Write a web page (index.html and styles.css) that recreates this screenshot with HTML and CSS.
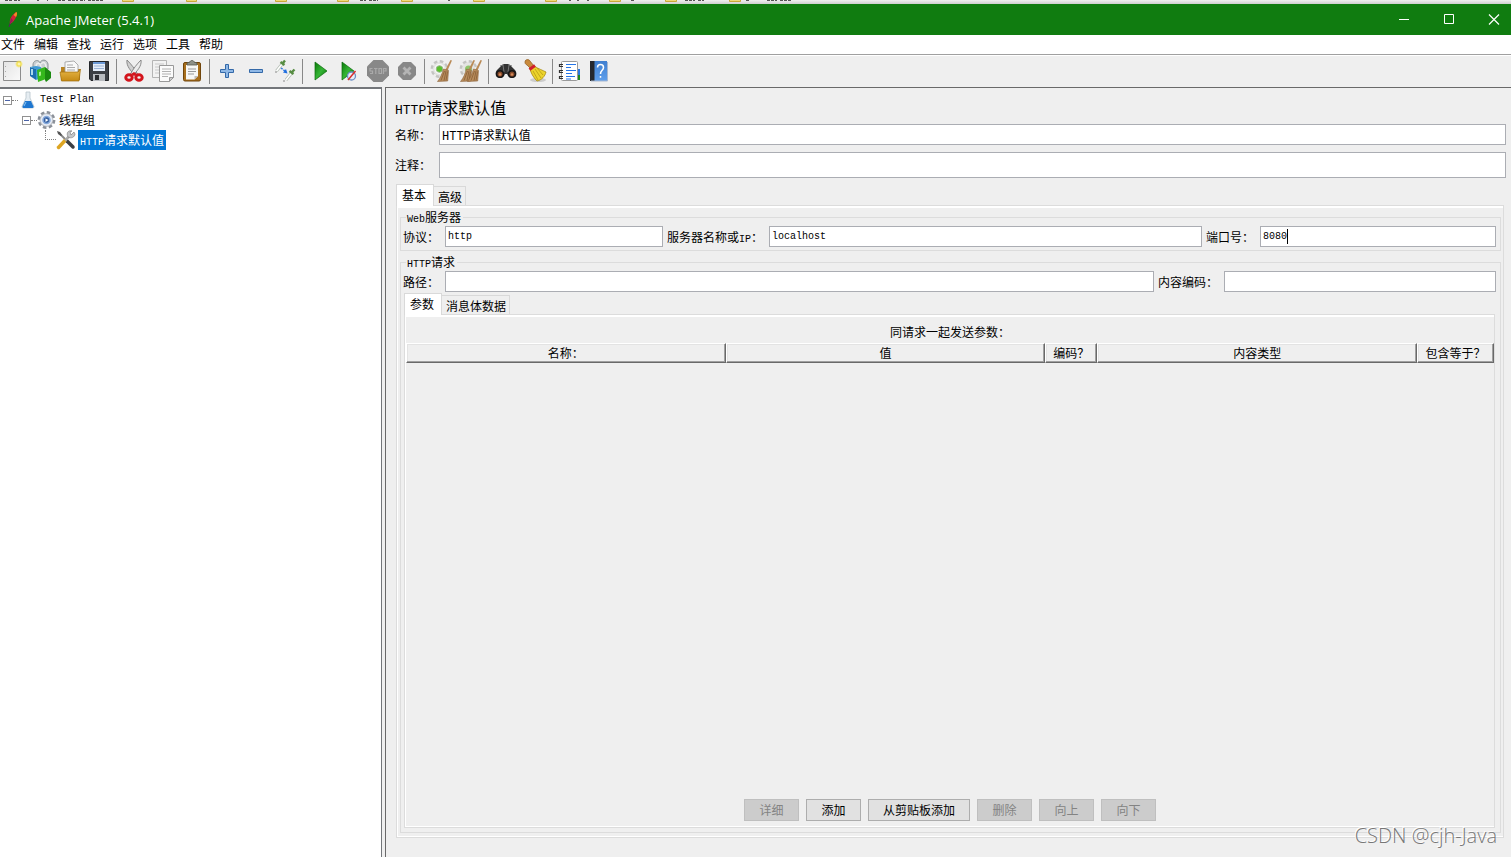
FILE: index.html
```html
<!DOCTYPE html>
<html lang="zh-CN">
<head>
<meta charset="utf-8">
<title>Apache JMeter (5.4.1)</title>
<link rel="stylesheet" href="styles.css">
</head>
<body>
<svg class="defs" width="0" height="0" aria-hidden="true">
  <defs>
    <linearGradient id="sheet" x1="0" y1="0" x2="1" y2="1"><stop offset="0" stop-color="#e4e4e4"/><stop offset="1" stop-color="#fafafa"/></linearGradient>
    <linearGradient id="gold" x1="0" y1="0" x2="0" y2="1"><stop offset="0" stop-color="#e8b84a"/><stop offset="1" stop-color="#c58a14"/></linearGradient>
    <linearGradient id="play" x1="0" y1="0" x2="1" y2="1"><stop offset="0" stop-color="#0a7a0a"/><stop offset=".5" stop-color="#35b535"/><stop offset="1" stop-color="#067006"/></linearGradient>
    <linearGradient id="blue" x1="0" y1="0" x2="0" y2="1"><stop offset="0" stop-color="#3f7fd0"/><stop offset="1" stop-color="#5f9fec"/></linearGradient>
    <radialGradient id="glow"><stop offset="0" stop-color="#fffde0"/><stop offset=".5" stop-color="#f4e04c"/><stop offset="1" stop-color="#f4e04c" stop-opacity="0"/></radialGradient>
    <g id="gear"><circle cx="9.500" cy="10" r="7" stroke="none"/><circle cx="9.500" cy="10" r="7.700" fill="none" stroke-width="2.400" stroke-dasharray="3.600 2.450"/></g>
    <g id="broom"><path d="M20.500 1l1.500.6-4.500 9.900-2-.9z" fill="#b98a56"/><path d="M13.500 10l5 1.500-.8 10.500-10.200.5c3-3.500 4.500-7.500 6-12.500z" fill="#b98d5c" stroke="#8c633a" stroke-width=".6"/><path d="M14.500 12l-3.500 9.500M16 12l-2 9.700M17.500 12.500l-1.500 9" stroke="#7f5831" stroke-width=".7"/></g>
  </defs>
</svg>

<div class="strip" aria-hidden="true">
  <svg width="820" height="3" viewBox="0 0 820 3">
    <g fill="#f0d97c" stroke="#c9a83a"><path d="M122.500-3v4.500h11V-3M186.500-3v4.500h10V-3M275.500-3v4.500h11V-3M337.500-3v4.500h11V-3M401.500-3v4.500h11V-3M473.500-3v4.500h11V-3M545.500-3v4.500h11V-3M609.500-3v4.500h11V-3M665.500-3v4.500h11V-3M729.500-3v4.500h11V-3"/></g>
    <path d="M5 .5h7m2 0h6m17 0h2m8 0h1m10 0h8m2 0h10m2 0h5m3 0h16m256 0h6m3 0h9m70 0h2m119 0h2m6 0h2m8 0h2m42 0h4m50 0h10m3 0h6m42 0h3m18 0h10m3 0h12" stroke="#555" stroke-dasharray="3 1"/>
  </svg>
</div>

<header class="titlebar">
  <svg class="feather" width="12" height="18" viewBox="0 0 12 18"><path d="M2 16l2-6" stroke="#5a2060" fill="none"/><path d="M3 13C2 8 5 4 9 1c2 1 1 4-1 7-1 2-3 4-5 5z" fill="#d02238"/><path d="M6.500 4C8 2 9 1 9.500 1c1 1 .5 3-.5 5z" fill="#f08a24"/><path d="M3 13c0-2 0-4 1.500-6L6 10z" fill="#8d1b57"/></svg>
  <h1 class="titlebar-text">Apache JMeter (5.4.1)</h1>
  <div class="window-buttons">
    <button type="button" aria-label="最小化"><svg width="12" height="12" viewBox="0 0 12 12"><path d="M1 5.500h10" stroke="#fff"/></svg></button>
    <button type="button" aria-label="最大化"><svg width="12" height="12" viewBox="0 0 12 12"><path d="M1.500 .5h9v9h-9z" stroke="#fff" fill="none"/></svg></button>
    <button type="button" aria-label="关闭"><svg width="12" height="12" viewBox="0 0 12 12"><path d="M1 .5l10 10M11 .5l-10 10" stroke="#fff" stroke-width="1.200"/></svg></button>
  </div>
</header>

<nav class="menubar">
  <button type="button">文件</button><button type="button">编辑</button><button type="button">查找</button><button type="button">运行</button><button type="button">选项</button><button type="button">工具</button><button type="button">帮助</button>
</nav>

<div class="toolbar" role="toolbar">
  <button type="button" aria-label="新建"><svg viewBox="0 0 24 24"><path d="M3.500 2.500h17v19h-17z" fill="url(#sheet)" stroke="#8c8c8c"/><path d="M5.500 7v1m0 4v1m0 4v1" stroke="#aaa"/><circle cx="19" cy="5" r="4" fill="url(#glow)"/></svg></button>
  <button type="button" aria-label="模板"><svg viewBox="0 0 24 24"><path d="M4 6c0-5 6-6 7-2 1-4 7-4 8 1v5H4z" fill="#c9cfd2" stroke="#8a9296"/><path d="M7 8c0-5 4-5 5 0m0-3c3-3 5-1 5 4" fill="none" stroke="#eee" stroke-width="1.500"/><path d="M1 8l6 2v11l-6-4z" fill="#1c6db0"/><path d="M1 8l6-1 5 1v11l-5 2V10z" fill="#3d9ad6"/><path d="M3 10v6" stroke="#dff" stroke-width="1.500"/><path d="M8 11l8-3 1 12-8 3z" fill="#35b81c"/><path d="M16 8l6 5v6l-5 4-1-2z" fill="#1b8a10"/><path d="M10 13l2-.6v4l-2 .6z" fill="#aaf08e"/></svg></button>
  <button type="button" aria-label="打开"><svg viewBox="0 0 24 24"><path d="M3 8h7l2 2h10v11H3z" fill="#b98420"/><path d="M7 3l9-1 4 4v8H7z" fill="#f8f8f8" stroke="#999" stroke-width=".8"/><path d="M9 6h6M9 8.500h8M9 11h8" stroke="#aaa"/><path d="M2 13h18l2.500-3-1.500 12H3.500z" fill="url(#gold)" stroke="#a06f0c" stroke-width=".7"/></svg></button>
  <button type="button" aria-label="保存"><svg viewBox="0 0 24 24"><path d="M2.500 2.500h19v19H4l-1.500-1.500z" fill="#3c3f45" stroke="#24262a"/><path d="M6 3h12v9H6z" fill="#e6eefa"/><path d="M6 3h12v2H6z" fill="#6c99d6"/><path d="M7 7h10M7 9.500h10" stroke="#9bb4d8"/><path d="M6 15h12v7H6z" fill="#b8bbc0"/><path d="M8 16h4v5H8z" fill="#2b2d31"/></svg></button>
  <span class="separator"></span>
  <button type="button" aria-label="剪切"><svg viewBox="0 0 24 24"><path d="M5 1c4 4 8 9 10.500 14l-2.500 1.500C9 12 4 7 5 1z" fill="#d0d0d0" stroke="#7e7e7e" stroke-width=".9"/><path d="M19 1c-4 4-8 9-10.500 14l2.500 1.500c4-4.500 9-9.500 8-15.500z" fill="#ececec" stroke="#7e7e7e" stroke-width=".9"/><ellipse cx="7" cy="18.500" rx="3.200" ry="2.800" fill="none" stroke="#d3141c" stroke-width="3"/><ellipse cx="17" cy="18.500" rx="3.200" ry="2.800" fill="none" stroke="#d3141c" stroke-width="3"/><path d="M9 15l3-2 3 2-3 2z" fill="#d3141c"/></svg></button>
  <button type="button" aria-label="复制"><svg viewBox="0 0 24 24"><path d="M1.500 1.500h14v17h-14z" fill="#f2f2f2" stroke="#b5b5b5"/><path d="M4 5h9M4 8h5M4 11h4M4 14h4" stroke="#c8c8c8"/><path d="M8.500 6.500h14v12l-4 4h-10z" fill="#fbfbfb" stroke="#999"/><path d="M22.500 18.500l-4 0v4z" fill="#ccc" stroke="#999"/><path d="M11 10h9M11 12.500h9M11 15h9M11 17.500h6" stroke="#b2b2b2"/></svg></button>
  <button type="button" aria-label="粘贴"><svg viewBox="0 0 24 24"><rect x="3.500" y="3.500" width="17" height="18.500" rx="1.500" fill="#a86f1c" stroke="#70450b"/><path d="M6 6h12v11l-3.500 3.500H6z" fill="#f7f7f5"/><path d="M18 17h-3.500v3.500z" fill="#bbb"/><path d="M8 10h8M8 12.500h8M8 15h6" stroke="#999"/><path d="M7 6V4l3-1c0-2 4-2 4 0l3 1v2z" fill="#8d9087" stroke="#55584f" stroke-width=".8"/></svg></button>
  <span class="separator"></span>
  <button type="button" aria-label="展开"><svg viewBox="0 0 24 24"><path d="M10.500 5.500h3v5h5v3h-5v5h-3v-5h-5v-3h5z" fill="#8fb8e6" stroke="#3469a8"/></svg></button>
  <button type="button" aria-label="折叠"><svg viewBox="0 0 24 24"><path d="M5.500 10.500h13v3h-13z" fill="#8fb8e6" stroke="#3469a8"/></svg></button>
  <button type="button" aria-label="切换"><svg viewBox="0 0 24 24"><path d="M9.500 4.500L3.500 12" stroke="#b4beb4" stroke-width="3"/><path d="M9.500 4.500L3.500 12" stroke="#fff" stroke-width="1.500"/><path d="M7.500 3l4 3M9.500 4.500L12 1.500" stroke="#568c42" stroke-width="2.400"/><path d="M19 13.500l-6 7.500" stroke="#b4beb4" stroke-width="3"/><path d="M19 13.500l-6 7.500" stroke="#fff" stroke-width="1.500"/><path d="M16.500 12l4 3M18.500 13.500l3-3" stroke="#568c42" stroke-width="2.400"/><path d="M8 9l4 3" stroke="#357ce0" stroke-width="1.500" stroke-dasharray="2 1"/><path d="M14.500 14.500l-4.500-1 3-3.500z" fill="#1f6fe0"/><path d="M2 13h2m6 9h2" stroke="#888"/></svg></button>
  <span class="separator"></span>
  <button type="button" aria-label="启动"><svg viewBox="0 0 24 24"><path d="M7 3l12 9L7 21z" fill="url(#play)" stroke="#0c6b0c" stroke-width=".7"/></svg></button>
  <button type="button" aria-label="不停顿开始"><svg viewBox="0 0 24 24"><path d="M5 3l12 9-12 9z" fill="url(#play)" stroke="#0c6b0c" stroke-width=".7"/><circle cx="14.500" cy="17" r="4" fill="#e8eef8" stroke="#6c8fc4" stroke-width="1.300"/><path d="M11 21l7.500-9" stroke="#d9302c" stroke-width="1.500"/></svg></button>
  <button type="button" aria-label="停止" disabled><svg viewBox="0 0 24 24"><path d="M7.500 1h9L23 7.500v9L16.500 23h-9L1 16.500v-9z" fill="#888"/><path d="M6.500 9.500H4v2.500h2.500v2.500H4M8 9.500h3.500m-1.700 0v5.500M13 9.500h2.500v5H13zM17.500 15V9.500H20V12h-2.500" fill="none" stroke="#aaa" stroke-width="1.200"/></svg></button>
  <button type="button" aria-label="关闭" disabled><svg viewBox="0 0 24 24"><path d="M8 3h8l5 5v8l-5 5H8l-5-5V8z" fill="#888"/><path d="M8.500 8.500l7 7m0-7l-7 7" stroke="#b4b4b4" stroke-width="2.800"/></svg></button>
  <span class="separator"></span>
  <button type="button" aria-label="清除"><svg viewBox="0 0 24 24"><use href="#gear" fill="#e4e4e2" stroke="#c4c4c2"/><circle cx="9.500" cy="10" r="5" fill="#f8f8f8"/><circle cx="9.500" cy="10" r="3.300" fill="#5abf2c" stroke="#9ab88c"/><use href="#broom"/></svg></button>
  <button type="button" aria-label="清除全部"><svg viewBox="0 0 24 24"><use href="#gear" fill="#e4e4e2" stroke="#c4c4c2"/><circle cx="9.500" cy="10" r="3.500" fill="#8fc46a"/><use href="#broom" x="-6"/><use href="#broom" x="1"/></svg></button>
  <span class="separator"></span>
  <button type="button" aria-label="查找"><svg viewBox="0 0 24 24"><path d="M8 6l2-1h4l2 1 5 5c3 4 1 8-3 8-3 0-4-2-5-4h-2c-1 2-2 4-5 4-4 0-6-4-3-8z" fill="#333"/><path d="M6 7l3-1 1 7m8-6l-3-1-1 7" stroke="#777" fill="none"/><circle cx="6" cy="15" r="3.300" fill="#85492a" stroke="#151515" stroke-width="1.500"/><circle cx="18" cy="15" r="3.300" fill="#85492a" stroke="#151515" stroke-width="1.500"/><circle cx="6" cy="15.500" r="1.300" fill="#d58a58"/><circle cx="18" cy="15.500" r="1.300" fill="#d58a58"/></svg></button>
  <button type="button" aria-label="重置查找"><svg viewBox="0 0 24 24"><ellipse cx="15" cy="21" rx="8" ry="2" fill="#ccc"/><path d="M2 3c0-3 4-3 5-1l4 5-3 3-4-4C2 5 2 4 2 3z" fill="#c98a3c" stroke="#8c5a1c" stroke-width=".7"/><path d="M11 7c5 3 8 4 12 6-1 4-4 8-9 9-4-4-6-8-7-12z" fill="#ecd42c" stroke="#a88a10" stroke-width=".8"/><path d="M12 10l6 9m-8-7l5 9m-1-12l6 7" stroke="#b89a14" stroke-width=".8"/><path d="M6.500 10.500L12 6.500" stroke="#d0202c" stroke-width="3"/></svg></button>
  <span class="separator"></span>
  <button type="button" aria-label="函数助手"><svg viewBox="0 0 24 24"><path d="M18 10h4v6h-4z" fill="#2c78e0"/><path d="M18 16h4v5h-4z" fill="#1c8a1c"/><rect x="3.500" y="2.500" width="16" height="19" rx="1" fill="#fff" stroke="#999"/><path d="M8 5.500h10M8 8.500h5M8 11.500h10M8 14.500h6M8 17.500h9M8 20h5" stroke="#2575e8"/><path d="M5 5.500H1.500v2H5M5 11.500H1.500v2H5M5 17.500H1.500v2H5" fill="none" stroke="#333" stroke-width="1.200"/></svg></button>
  <button type="button" aria-label="帮助"><svg viewBox="0 0 24 24"><path d="M3 2h17v20H3z" fill="url(#blue)"/><path d="M3 2h4.500v20H3z" fill="#25282e"/><path d="M20.500 3v19H4" stroke="#a8b8d0" fill="none"/><path d="M10.500 8.500c0-4 6-4 6 0 0 3-3 2.500-3 6.500m0 2v1.700" fill="none" stroke="#fff" stroke-width="1.500"/></svg></button>
</div>

<main class="workspace">
  <aside class="tree" aria-label="测试计划">
    <div class="tree-row">
      <button class="expander" type="button" aria-label="折叠 Test Plan"></button><span class="branch"></span>
      <svg width="14" height="18" viewBox="0 0 14 18"><path d="M5 1v6L1 15.500c0 1 .5 1.500 1.500 1.500h9c1 0 1.500-.5 1.500-1.500L9 7V1z" fill="#e6edf2" stroke="#b8c4cc" stroke-width=".8"/><path d="M4 10h6l2.700 6-1 1H2.300l-1-1z" fill="#1f77d0"/><path d="M5 11l-2 4" stroke="#8cc8f4"/></svg>
      <span class="tree-label latin">Test Plan</span>
    </div>
    <div class="tree-row level-1">
      <button class="expander" type="button" aria-label="折叠 线程组"></button><span class="branch"></span>
      <svg width="20" height="20" viewBox="0 0 20 20"><use href="#gear" fill="#c3c7ce" stroke="#8b9098"/><circle cx="9.500" cy="10" r="5" fill="#86a9dc" stroke="#e8edf5" stroke-width="1.500"/><circle cx="9.500" cy="10" r="2.700" fill="#355f9f"/><path d="M8.500 8.500l3 1.500-3 2z" fill="#fff"/></svg>
      <span class="tree-label">线程组</span>
    </div>
    <div class="tree-row level-2">
      <span class="elbow"></span>
      <svg width="20" height="20" viewBox="0 0 20 20"><path d="M3 3l8 8" stroke="#888" stroke-width="2"/><path d="M1 1l3 1 2 3-1 1-3-2z" fill="#555"/><path d="M11 11l6 6" stroke="#3b3f45" stroke-width="3.500" stroke-linecap="round"/><path d="M2.500 17.500L9 10.500" stroke="#dda522" stroke-width="3.500" stroke-linecap="round"/><path d="M9 10.500l5-5" stroke="#aaa" stroke-width="2.500"/><path d="M18 2l-3 3-1-3 2-1c-4-1-6 2-4 6 3 2 7 0 7-3z" fill="#c4c6c8" stroke="#777" stroke-width=".6"/></svg>
      <span class="tree-label selected"><span class="latin">HTTP</span>请求默认值</span>
    </div>
  </aside>

  <section class="editor">
    <h2 class="editor-title"><span class="latin">HTTP</span>请求默认值</h2>
    <div class="head-row"><label for="name">名称：</label><input id="name" class="mixed" type="text" value="HTTP请求默认值"></div>
    <div class="head-row tall"><label for="comment">注释：</label><input id="comment" type="text"></div>

    <div class="tabpane outer">
      <div class="tabs" role="tablist">
        <button class="tab active" type="button" role="tab" aria-selected="true">基本</button><button class="tab" type="button" role="tab" aria-selected="false">高级</button>
      </div>
      <div class="tabbody">
        <fieldset>
          <legend><span class="latin">Web</span>服务器</legend>
          <div class="field-row">
            <label for="protocol">协议：</label><input id="protocol" class="protocol" type="text" value="http">
            <label for="server">服务器名称或<span class="latin">IP</span>：</label><input id="server" class="server" type="text" value="localhost">
            <label for="port">端口号：</label><span class="port"><input id="port" type="text" value="8080"><span class="caret"></span></span>
          </div>
        </fieldset>
        <fieldset class="request">
          <legend><span class="latin">HTTP</span>请求</legend>
          <div class="field-row">
            <label for="path">路径：</label><input id="path" class="path" type="text">
            <label for="encoding">内容编码：</label><input id="encoding" class="encoding" type="text">
          </div>
          <div class="tabpane inner">
            <div class="tabs" role="tablist">
              <button class="tab active" type="button" role="tab" aria-selected="true">参数</button><button class="tab" type="button" role="tab" aria-selected="false">消息体数据</button>
            </div>
            <div class="tabbody">
              <table>
                <caption>同请求一起发送参数：</caption>
                <colgroup><col><col><col class="col-encode"><col><col class="col-equals"></colgroup>
                <thead><tr><th>名称：</th><th>值</th><th>编码？</th><th>内容类型</th><th>包含等于？</th></tr></thead>
              </table>
              <div class="actions">
                <button type="button" disabled>详细</button>
                <button type="button">添加</button>
                <button type="button">从剪贴板添加</button>
                <button type="button" disabled>删除</button>
                <button type="button" disabled>向上</button>
                <button type="button" disabled>向下</button>
              </div>
            </div>
          </div>
        </fieldset>
      </div>
    </div>
  </section>
</main>
<div class="watermark">CSDN @cjh-Java</div>
</body>
</html>
```

FILE: styles.css
```css
* { box-sizing: border-box; }

body {
  margin: 0;
  min-height: 100vh;
  display: flex;
  flex-direction: column;
  position: relative;
  background: #efefef;
  color: #000;
  font: 12px/14px "Noto Sans CJK SC", sans-serif;
}

button, input {
  margin: 0;
  padding: 0;
  border: 0;
  background: none;
  color: inherit;
  font: inherit;
}

svg { display: block; flex: none; }
.defs { position: absolute; }

.latin {
  font-family: "Liberation Mono", monospace;
  font-size: 10px;
  line-height: 8px;
}

.strip {
  height: 4px;
  overflow: hidden;
  background: linear-gradient(#f1f1f1, #cfcfcf);
}

.titlebar {
  display: flex;
  align-items: center;
  height: 31px;
  padding-left: 7px;
  background: #107c10;
  color: #fff;
}

.titlebar-text {
  flex: 1;
  margin: 0 0 0 7px;
  font: 13px/16px "Open Sans", sans-serif;
}

.window-buttons { display: flex; }

.window-buttons button {
  display: grid;
  place-items: center;
  width: 45px;
  height: 31px;
}

.window-buttons button:last-child {
  width: 40px;
  padding-left: 6px;
}

.menubar {
  display: flex;
  gap: 9px;
  height: 20px;
  padding: 0 1px 2px;
  border-bottom: 1px solid #a0a0a0;
  background: #fff;
}

.toolbar {
  display: flex;
  align-items: center;
  gap: 5px;
  height: 32px;
  padding-bottom: 1px;
  border-top: 1px solid #fff;
}

.toolbar button, .toolbar svg {
  width: 24px;
  height: 24px;
}

.separator {
  width: 1px;
  height: 25px;
  background: #888;
}

.workspace {
  display: flex;
  flex: 1;
}

.tree {
  flex: 0 0 382px;
  padding: 1px 0 0 3px;
  border-top: 2px solid #73767a;
  border-right: 1px solid #73767a;
  background: #fff;
}

.tree-row {
  display: flex;
  align-items: center;
  height: 20px;
}

.level-1 { padding-left: 19px; }
.level-2 { padding-left: 42px; }

.expander {
  width: 9px;
  height: 9px;
  border: 1px solid #919191;
  background: linear-gradient(#4b63a7, #4b63a7) center / 5px 1px no-repeat #fff;
}

.branch {
  width: 6px;
  margin-right: 3px;
  border-top: 1px dotted #808080;
}

.level-1 .branch { margin-right: 0; }

.elbow {
  align-self: flex-start;
  width: 11px;
  height: 10px;
  border: dotted #808080;
  border-width: 0 0 1px 1px;
}

.tree-label {
  margin-left: 5px;
  line-height: 20px;
}

.level-1 .tree-label { margin-left: 2px; }

.tree-label.selected {
  margin-left: 2px;
  padding: 0 2px;
  background: #0078d7;
  color: #fff;
}

.editor {
  display: flex;
  flex: 1;
  flex-direction: column;
  min-width: 0;
  margin-left: 3px;
  padding: 9px 5px 19px 9px;
  border-top: 1px solid #696969;
  border-left: 1px solid #696969;
}

.editor-title {
  height: 20px;
  margin: 0 0 7px;
  font-size: 16px;
  font-weight: 400;
  line-height: 20px;
}

.editor-title .latin { font-size: 13px; }

.head-row {
  display: flex;
  align-items: center;
  gap: 8px;
  height: 21px;
  margin-bottom: 7px;
}

.head-row.tall {
  height: 26px;
  margin-bottom: 6px;
}

input {
  min-width: 0;
  height: 21px;
  padding: 0 2px;
  border: 1px solid #abadb3;
  background: #fff;
  font: 10px "Liberation Mono", monospace;
}

input.mixed { font: 12px "Liberation Mono", "Noto Sans CJK SC", monospace; }
.head-row input { flex: 1; }
.head-row.tall input { height: 26px; }

.tabpane {
  display: flex;
  flex: 1;
  flex-direction: column;
}

.outer { margin: 0 2px 0 1px; }
.inner { margin: 1px 1px 0; }

.tabs {
  display: flex;
  align-items: flex-end;
  height: 21px;
}

.tab {
  height: 19px;
  padding: 2px 3px 0 4px;
  border: 1px solid #d9d9d9;
  border-width: 1px 1px 0 0;
}

.tab.active {
  position: relative;
  height: 22px;
  margin-bottom: -1px;
  padding: 0 7px 1px 5px;
  border-left-width: 1px;
  background: #fff;
}

.tabbody {
  display: flex;
  flex: 1;
  flex-direction: column;
  border: 1px solid #dcdcdc;
  box-shadow: inset 1px 0 #fff, inset 0 2px #fff, inset 0 -1px #fff;
}

.outer > .tabbody { padding: 4px 2px 4px 3px; }
.inner > .tabbody { padding: 10px 0 6px 1px; }

fieldset {
  min-width: 0;
  margin: 0 0 4px;
  padding: 2px 4px 3px 2px;
  border: 1px solid #dcdcdc;
}

fieldset.request {
  display: flex;
  flex: 1;
  flex-direction: column;
  margin: 0;
  padding-bottom: 4px;
}

legend {
  height: 14px;
  margin-left: 3px;
  padding: 0 2px 0 1px;
  line-height: 14px;
}

.field-row {
  display: flex;
  align-items: center;
  gap: 4px;
}

.field-row label {
  flex: none;
  margin-right: 2px;
}

.protocol { flex: 212 1 0; }
.server { flex: 427 1 0; }
.port { flex: 236 1 0; position: relative; display: flex; }
.port input { width: 100%; }
.path { flex: 703 1 0; }
.encoding { flex: 266 1 0; }

.caret {
  position: absolute;
  top: 3px;
  left: 27px;
  width: 1px;
  height: 15px;
  background: #000;
}

table {
  width: 100%;
  border-spacing: 0;
  table-layout: fixed;
}

caption {
  padding-bottom: 4px;
  line-height: 14px;
}

.col-encode { width: 52px; }
.col-equals { width: 77px; }

th {
  height: 20px;
  padding: 0;
  border: 1px solid;
  border-color: #fff #696969 #696969 #fff;
  box-shadow: inset -1px -1px #a0a0a0, inset 1px 1px #e3e3e3;
  font-weight: 400;
}

.actions {
  display: flex;
  justify-content: center;
  gap: 7px;
  margin-top: auto;
}

.actions button {
  min-width: 55px;
  height: 22px;
  padding: 0 14px;
  border: 1px solid #adadad;
  background: #e1e1e1;
  line-height: 20px;
}

.actions button:disabled {
  border-color: #bfbfbf;
  background: #ccc;
  color: #838383;
}

.watermark {
  position: absolute;
  right: 14px;
  bottom: 8px;
  color: #777;
  font: 300 20px/26px "Open Sans", "Noto Sans", sans-serif;
  text-shadow: -1px -1px #fff;
}
```
